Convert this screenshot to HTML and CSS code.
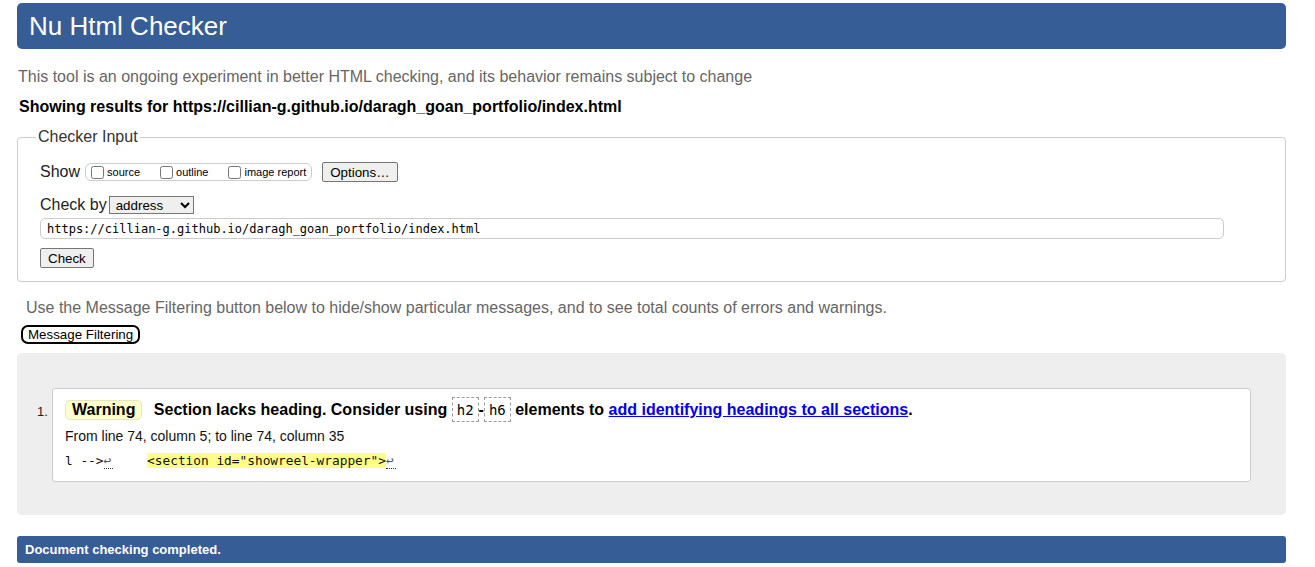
FILE: index.html
```html
<!DOCTYPE html>
<html lang="en">
<head>
<meta charset="utf-8">
<title>Nu Html Checker</title>
<link rel="stylesheet" href="styles.css">
</head>
<body>
<h1 class="title">Nu Html Checker</h1>
<p class="intro">This tool is an ongoing experiment in better HTML checking, and its behavior remains subject to change</p>
<p class="showing">Showing results for https://cillian-g.github.io/daragh_goan_portfolio/index.html</p>
<fieldset class="input">
  <legend>Checker Input</legend>
  <div class="row">
    <span class="lbl">Show</span>
    <span class="group">
      <label><input type="checkbox">source</label>
      <label><input type="checkbox">outline</label>
      <label><input type="checkbox">image report</label>
    </span>
    <button class="btn opts">Options…</button>
  </div>
  <div class="row row2">
    <span class="lbl">Check by</span>
    <select class="sel"><option>address</option></select>
  </div>
  <input class="url" type="text" value="https://cillian-g.github.io/daragh_goan_portfolio/index.html">
  <div class="row"><button class="btn check">Check</button></div>
</fieldset>
<p class="hint">Use the Message Filtering button below to hide/show particular messages, and to see total counts of errors and warnings.</p>
<button class="filter">Message Filtering</button>
<div class="results">
  <ol class="msgs">
    <li class="msg">
      <p class="head"><strong class="badge">Warning</strong> <span class="text">Section lacks heading. Consider using <code>h2</code>-<code>h6</code> elements to <a href="#">add identifying headings to all sections</a>.</span></p>
      <p class="loc">From line 74, column 5; to line 74, column 35</p>
      <p class="extract"><code>l --&gt;<span class="lf lf1">↩</span>    <b>&lt;section id="showreel-wrapper"&gt;</b><span class="lf">↩</span></code></p>
    </li>
  </ol>
</div>
<p class="done">Document checking completed.</p>
</body>
</html>
```
FILE: styles.css
```css
html, body { margin: 0; padding: 0; }
body {
  font-family: "Liberation Sans", Arial, sans-serif;
  background: #fff;
  color: #000;
  padding: 3px 29px 0 17px;
}
.title {
  margin: 0;
  background: #365d95;
  color: #fff;
  font-weight: normal;
  font-size: 26px;
  height: 46px;
  line-height: 46px;
  padding: 0 12px;
  border-radius: 5px;
}
.intro {
  margin: 18px 0 0 1px;
  font-size: 16px;
  color: #666;
  line-height: 20px;
}
.showing {
  margin: 10px 0 0 2px;
  font-size: 16px;
  font-weight: bold;
  line-height: 20px;
}
.input {
  margin: 11px 0 0 0;
  border: 1px solid #ccc;
  border-radius: 4px;
  padding: 16px 61px 13px 22px;
  min-width: 0;
}
.input legend {
  font-size: 16px;
  color: #333;
  padding: 0 2px;
  margin-left: -4px;
}
.row { display: flex; align-items: center; }
.lbl { font-size: 16px; color: #222; margin-right: 3px; }
.group {
  display: inline-flex;
  align-items: center;
  border: 1px solid #ccc;
  border-radius: 6px;
  height: 18px;
  box-sizing: border-box;
  padding: 0 5px 0 4px;
  font-size: 11px;
  margin-left: 2px;
}
.group label { display: inline-flex; align-items: center; margin-right: 19px; }
.group label:last-child { margin-right: 0; }
.group input { margin: 0 3px 0 1px; width: 13px; height: 13px; }
.btn {
  font-family: "Liberation Sans", Arial, sans-serif;
  font-size: 13.33px;
  background: #efefef;
  border: 1px solid #767676;
  border-radius: 2px;
  padding: 1px 7px;
  color: #000;
}
.opts { margin-left: 10px; height: 20px; }
.row2 { margin-top: 14px; }
.sel {
  font-family: "Liberation Sans", Arial, sans-serif;
  font-size: 13.33px;
  width: 85px;
  height: 18px;
  border: 1px solid #767676;
  border-radius: 0;
  padding: 0 2px;
  margin-left: -1px;
}
.url {
  display: block;
  box-sizing: border-box;
  width: 100%;
  height: 21px;
  margin: 4px 0 9px 0;
  border: 1px solid #ccc;
  border-radius: 5px;
  font-family: "DejaVu Sans Mono", monospace;
  font-size: 12px;
  padding: 0 6px;
  color: #000;
}
.check { height: 20px; }
.hint {
  margin: 16px 0 0 9px;
  font-size: 16px;
  color: #666;
  line-height: 20px;
}
.filter {
  display: block;
  margin: 7px 0 0 4px;
  font-family: "Liberation Sans", Arial, sans-serif;
  font-size: 13.33px;
  background: #fff;
  color: #000;
  border: 2px solid #000;
  border-radius: 7px;
  padding: 0 5px;
  height: 19px;
  line-height: 14px;
}
.results {
  margin-top: 9px;
  background: #eee;
  border-radius: 5px;
  padding: 35px 35px 33px 35px;
}
.msgs { margin: 0; padding: 0; list-style: none; }
.msg {
  background: #fff;
  border: 1px solid #ccc;
  border-radius: 3px;
  padding: 9px 12px 10px 12px;
  position: relative;
}
.msg::before {
  content: "1.";
  position: absolute;
  left: -16px;
  top: 15px;
  font-size: 13px;
  color: #222;
}
.head { margin: 0; font-size: 16px; font-weight: bold; line-height: 24px; }
.badge {
  display: inline-block;
  background: #ffc;
  border: 1px solid #e6e6bb;
  border-radius: 5px;
  padding: 0 6px;
  line-height: 18px;
  margin-right: 7px;
}
.head code {
  font-family: "DejaVu Sans Mono", monospace;
  font-weight: normal;
  font-size: 14px;
  border: 1px dashed #999;
  padding: 4px 4px 3px 4px;
  margin: 0;
}
.head a { color: #00e; text-decoration: underline; }
.loc { margin: 4px 0 0 0; font-size: 14px; line-height: 20px; color: #111; }
.extract { margin: 5px 0 0 0; font-size: 13px; line-height: 20px; }
.extract code {
  font-family: "DejaVu Sans Mono", monospace;
  font-size: 12.8px;
  white-space: pre;
  color: #111;
}
.extract b { font-weight: normal; background: #ff8; }
.lf { color: #555; border-bottom: 1px dotted #333; padding-right: 2px; }
.lf1 { margin-right: 3px; }
.done {
  margin: 21px 0 0 0;
  background: #365d95;
  color: #fff;
  font-weight: bold;
  font-size: 13px;
  height: 27px;
  line-height: 27px;
  padding: 0 8px;
  border-radius: 3px;
}
```
